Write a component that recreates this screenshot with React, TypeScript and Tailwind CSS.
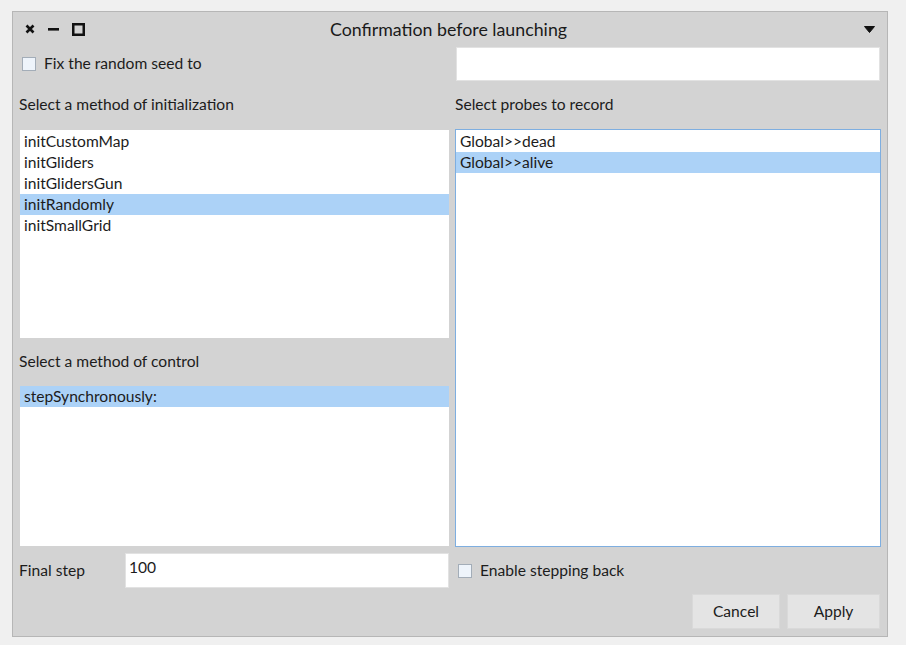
import React from "react";

const initMethods = ["initCustomMap", "initGliders", "initGlidersGun", "initRandomly", "initSmallGrid"];
const probes = ["Global>>dead", "Global>>alive"];

function Checkbox() {
  return <span className="block w-[14px] h-[14px] border border-[#a3adb8] bg-[#eef4fb] shrink-0" />;
}

function ListItem({ label, selected }: { label: string; selected?: boolean }) {
  return (
    <div className={`h-[21px] leading-[21px] pl-[4px] ${selected ? "bg-[#acd2f7]" : ""}`}>{label}</div>
  );
}

export default function App() {
  return (
    <div className="min-h-screen bg-[#f0f0f0] pl-[12px] pt-[11px] font-['Lato',sans-serif] text-[15.6px] text-[#1c1c1c]">
      <div className="w-[876px] h-[626px] border border-[#b6b6b6] bg-[#d3d3d3] flex flex-col">
        {/* Title bar */}
        <div className="h-[34px] grid grid-cols-[1fr_auto_1fr] items-center pl-[12px] pr-[12px]">
          <div className="flex items-center gap-[13px]">
            <svg width="10" height="10" viewBox="0 0 10 10">
              <path d="M1.5 1.5 L8.5 8.5 M8.5 1.5 L1.5 8.5" stroke="#111" strokeWidth="2.6" strokeLinecap="butt" />
            </svg>
            <svg width="11" height="10" viewBox="0 0 11 10">
              <rect x="0" y="4" width="11" height="2.6" fill="#111" />
            </svg>
            <svg width="13" height="13" viewBox="0 0 13 13">
              <rect x="1.25" y="1.25" width="10.5" height="10.5" fill="none" stroke="#111" strokeWidth="2.5" />
            </svg>
          </div>
          <div className="text-[17.8px] text-[#1a1a1a] pr-[3px]">Confirmation before launching</div>
          <div className="flex justify-end">
            <svg width="11" height="7" viewBox="0 0 11 7">
              <path d="M0.5 0.5 L10.5 0.5 L5.5 6.5 Z" fill="#111" stroke="#111" strokeLinejoin="round" />
            </svg>
          </div>
        </div>

        {/* Body */}
        <div className="pl-[6px] pr-[5px] pt-[1px] grid grid-cols-[430px_426px] gap-x-[6px]">
          <div className="h-[34px] flex items-center gap-[8px] pl-[3px]">
            <Checkbox />
            <span>Fix the random seed to</span>
          </div>
          <div className="h-[34px] ml-[1px] w-[424px] bg-white border border-[#e2e2e2]" />

          <div className="h-[48px] flex items-center">Select a method of initialization</div>
          <div className="h-[48px] flex items-center">Select probes to record</div>

          <div className="flex flex-col">
            <div className="mt-[1px] ml-[1px] h-[208px] bg-white pt-[1px]">
              {initMethods.map((m) => (
                <ListItem key={m} label={m} selected={m === "initRandomly"} />
              ))}
            </div>
            <div className="h-[48px] flex items-center">Select a method of control</div>
            <div className="ml-[1px] h-[160px] bg-white">
              <ListItem label="stepSynchronously:" selected />
            </div>
          </div>
          <div className="h-[418px] bg-white border border-[#7eaee0] pt-[1px]">
            {probes.map((p) => (
              <ListItem key={p} label={p} selected={p === "Global>>alive"} />
            ))}
          </div>

          <div className="mt-[6px] h-[35px] flex items-center">
            <span className="w-[106px]">Final step</span>
            <div className="flex-1 h-[35px] bg-white border border-[#e2e2e2] pl-[3px] pt-[3px] leading-[20px]">100</div>
          </div>
          <div className="mt-[6px] h-[35px] flex items-center gap-[8px] pl-[3px]">
            <Checkbox />
            <span>Enable stepping back</span>
          </div>

          <div />
          <div className="mt-[6px] flex justify-end gap-[7px] pr-[1px]">
            <button className="w-[88px] h-[35px] bg-[#e4e4e4] border border-[#d9d9d9]">Cancel</button>
            <button className="w-[93px] h-[35px] bg-[#e4e4e4] border border-[#d9d9d9]">Apply</button>
          </div>
        </div>
      </div>
    </div>
  );
}
